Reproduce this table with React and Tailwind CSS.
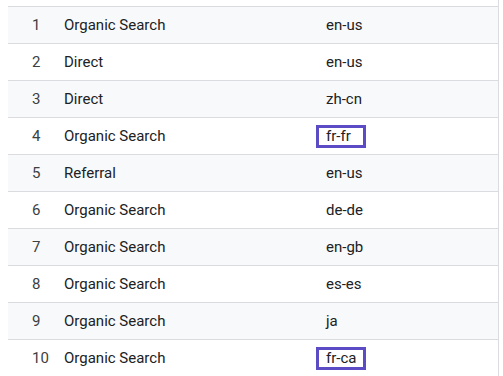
const rows = [
  { n: 1, source: 'Organic Search', lang: 'en-us' },
  { n: 2, source: 'Direct', lang: 'en-us' },
  { n: 3, source: 'Direct', lang: 'zh-cn' },
  { n: 4, source: 'Organic Search', lang: 'fr-fr', boxed: true },
  { n: 5, source: 'Referral', lang: 'en-us' },
  { n: 6, source: 'Organic Search', lang: 'de-de' },
  { n: 7, source: 'Organic Search', lang: 'en-gb' },
  { n: 8, source: 'Organic Search', lang: 'es-es' },
  { n: 9, source: 'Organic Search', lang: 'ja' },
  { n: 10, source: 'Organic Search', lang: 'fr-ca', boxed: true },
];

export default function App() {
  return (
    <div className="w-[503px] h-[376px] overflow-hidden bg-white font-['Roboto',sans-serif]">
      <div className="w-[499px] h-full border-r border-[#dadce0] pt-[6px] pl-[8px]">
        {rows.map((row, i) => (
          <div
            key={row.n}
            className={`flex items-center h-[37px] border-t border-[#dadce0] ${i % 2 === 0 ? 'bg-[#f8f9fa]' : 'bg-white'}`}
          >
            <div className="w-[56px] pl-[24px] text-[15px] text-[#3c4043]">{row.n}</div>
            <div className="w-[262px] text-[15px] text-[#202124]">{row.source}</div>
            <div className="text-[15px] text-[#202124]">
              {row.boxed ? (
                <span className="inline-flex items-center h-[23px] w-[50px] border-[3px] border-[#5b4bc4] pl-[7px] -ml-[10px]">
                  {row.lang}
                </span>
              ) : (
                row.lang
              )}
            </div>
          </div>
        ))}
      </div>
    </div>
  );
}
